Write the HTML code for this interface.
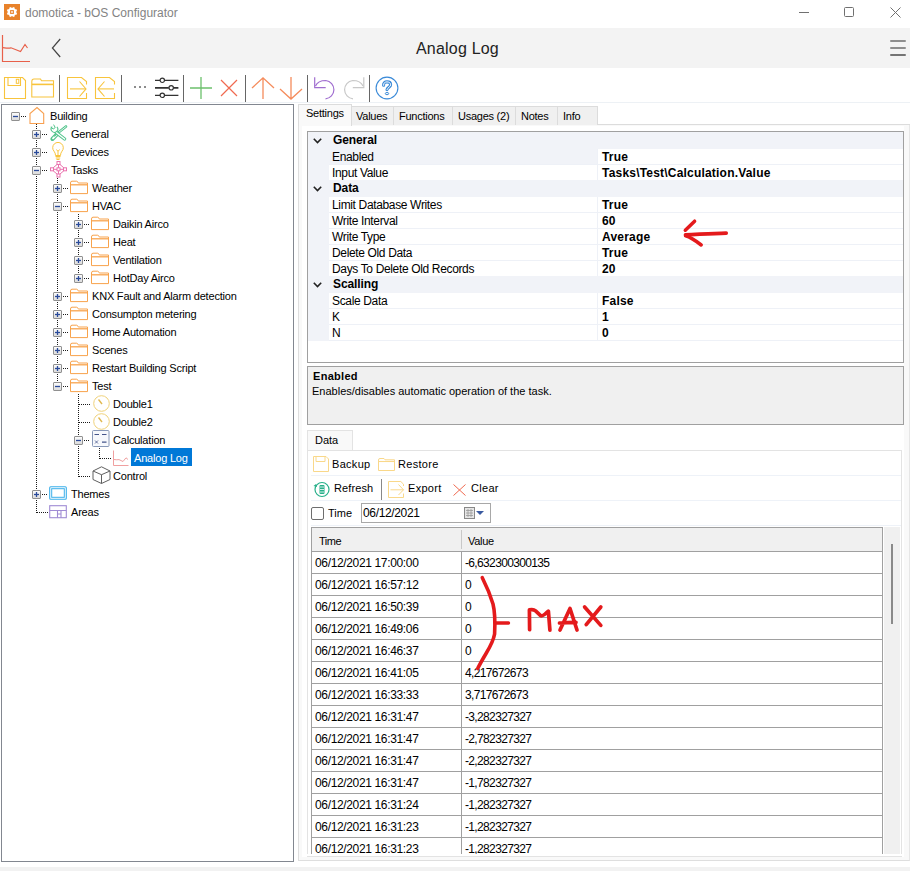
<!DOCTYPE html>
<html><head><meta charset="utf-8">
<style>
*{margin:0;padding:0;box-sizing:border-box}
html,body{width:910px;height:871px;overflow:hidden;background:#fff}
body{position:relative;font-family:"Liberation Sans",sans-serif;font-size:11px;color:#000}
.a{position:absolute}
.t{position:absolute;white-space:nowrap;line-height:12px;font-size:11px}
svg{position:absolute;overflow:visible}
</style></head><body>

<div class="a" style="left:4px;top:4px;width:16px;height:16px;background:#e8822a"></div>
<svg style="left:4px;top:4px" width="16" height="16" viewBox="0 0 16 16"><circle cx="8" cy="8" r="4.3" fill="#fff"/><rect x="7" y="2.9" width="2" height="2.5" fill="#fff" transform="rotate(22.5 8 8)"/><rect x="7" y="2.9" width="2" height="2.5" fill="#fff" transform="rotate(67.5 8 8)"/><rect x="7" y="2.9" width="2" height="2.5" fill="#fff" transform="rotate(112.5 8 8)"/><rect x="7" y="2.9" width="2" height="2.5" fill="#fff" transform="rotate(157.5 8 8)"/><rect x="7" y="2.9" width="2" height="2.5" fill="#fff" transform="rotate(202.5 8 8)"/><rect x="7" y="2.9" width="2" height="2.5" fill="#fff" transform="rotate(247.5 8 8)"/><rect x="7" y="2.9" width="2" height="2.5" fill="#fff" transform="rotate(292.5 8 8)"/><rect x="7" y="2.9" width="2" height="2.5" fill="#fff" transform="rotate(337.5 8 8)"/><rect x="6.1" y="6.1" width="3.8" height="3.8" fill="#e8822a"/><rect x="7.2" y="7.2" width="1.6" height="1.6" fill="#fff"/></svg>
<div class="t" style="left:25px;top:6px;font-size:12px;line-height:14px;color:#838383">domotica - bOS Configurator</div>
<div class="a" style="left:799px;top:12px;width:10px;height:1px;background:#707070"></div>
<div class="a" style="left:844px;top:7px;width:10px;height:10px;border:1px solid #707070;border-radius:1.5px"></div>
<svg style="left:890px;top:7px" width="11" height="11" viewBox="0 0 11 11"><path d="M0.5 0.5L10.5 10.5M10.5 0.5L0.5 10.5" stroke="#707070" stroke-width="1"/></svg>
<div class="a" style="left:0px;top:28px;width:910px;height:40px;background:#f3f3f3"></div>
<svg style="left:0px;top:28px" width="40" height="39" viewBox="0 0 40 39"><path d="M2.5 7v26.5H30" fill="none" stroke="#e8604a" stroke-width="1.2"/><path d="M3 19.6C6 20 8 20.6 11 19.8L20.5 23.5L25 16.5L27.5 20" fill="none" stroke="#e8604a" stroke-width="1.2"/></svg>
<svg style="left:50px;top:38px" width="14" height="20" viewBox="0 0 14 20"><path d="M10.2 1L2.4 10L10.2 19" fill="none" stroke="#444" stroke-width="1.2"/></svg>
<div class="t" style="left:416px;top:40px;font-size:16px;line-height:18px;color:#222;letter-spacing:0.2px">Analog Log</div>
<div class="a" style="left:890px;top:40px;width:16px;height:2px;background:#8e8e8e;border-radius:1px"></div>
<div class="a" style="left:890px;top:47px;width:16px;height:2px;background:#8e8e8e;border-radius:1px"></div>
<div class="a" style="left:890px;top:54px;width:16px;height:2px;background:#747474;border-radius:1px"></div>
<div class="a" style="left:0px;top:102px;width:910px;height:1px;background:#edf1f5"></div>
<svg style="left:4px;top:77px" width="22" height="22" viewBox="0 0 22 22"><path d="M0.5 0.5H18.5L21.5 3.5V21.5H0.5Z" fill="none" stroke="#f8c43c" stroke-width="1.1"/><path d="M4 0.5V8.5H16.5V0.5" fill="none" stroke="#f8c43c" stroke-width="1.1"/><rect x="12.3" y="2.3" width="2.5" height="4" fill="none" stroke="#f8c43c" stroke-width="1"/></svg>
<svg style="left:31px;top:78px" width="24" height="20" viewBox="0 0 24 20"><path d="M0.8 19V3.5Q0.8 1 3 1H9.5L10.5 2.8H22.5V19Z" fill="none" stroke="#f8c43c" stroke-width="1.1"/><path d="M0.8 6.4H22.5" stroke="#f8c43c" stroke-width="1.6"/></svg>
<div class="a" style="left:59px;top:75px;width:1px;height:27px;background:#666"></div>
<div class="a" style="left:121px;top:75px;width:1px;height:27px;background:#666"></div>
<div class="a" style="left:183px;top:75px;width:1px;height:27px;background:#666"></div>
<div class="a" style="left:245px;top:75px;width:1px;height:27px;background:#666"></div>
<div class="a" style="left:307px;top:75px;width:1px;height:27px;background:#666"></div>
<div class="a" style="left:369px;top:75px;width:1px;height:27px;background:#666"></div>
<svg style="left:67px;top:77px" width="21" height="23" viewBox="0 0 21 23"><path d="M19.5 7.5V4.5L14.5 0.5H0.5V21.5H19.5V16" fill="none" stroke="#f8c43c" stroke-width="1.1"/><path d="M3 11.9H19" stroke="#f8c43c" stroke-width="1.1"/><path d="M12.5 4.5L19 11.9L12.5 19.5" fill="none" stroke="#f8c43c" stroke-width="1.1"/></svg>
<svg style="left:95px;top:77px" width="21" height="23" viewBox="0 0 21 23"><path d="M19.5 7.5V4.5L14.5 0.5H0.5V21.5H19.5V16" fill="none" stroke="#f8c43c" stroke-width="1.1"/><path d="M3 11.9H19" stroke="#f8c43c" stroke-width="1.1"/><path d="M9.5 4.5L3 11.9L9.5 19.5" fill="none" stroke="#f8c43c" stroke-width="1.1"/></svg>
<div class="a" style="left:134px;top:86px;width:2px;height:2px;background:#666;border-radius:1px"></div>
<div class="a" style="left:139px;top:86px;width:2px;height:2px;background:#666;border-radius:1px"></div>
<div class="a" style="left:144px;top:86px;width:2px;height:2px;background:#666;border-radius:1px"></div>
<svg style="left:155px;top:76px" width="24" height="24" viewBox="0 0 24 24"><g stroke="#333" stroke-width="1.2" fill="none"><path d="M0 4.3H5M9.5 4.3H23.4"/><circle cx="7.3" cy="4.3" r="2.2"/><path d="M0 11.8H13.8M18.4 11.8H23.4" stroke-width="1.8"/><circle cx="16.2" cy="11.8" r="2.2"/><path d="M0 19.3H5M9.5 19.3H23.4"/><circle cx="7.3" cy="19.3" r="2.2"/></g></svg>
<svg style="left:190px;top:77px" width="22" height="22" viewBox="0 0 22 22"><path d="M11 0V22M0 11H22" stroke="#6cc06c" stroke-width="1.3"/></svg>
<svg style="left:221px;top:80px" width="16" height="16" viewBox="0 0 16 16"><path d="M0 0L16 16M16 0L0 16" stroke="#f06a50" stroke-width="1.2"/></svg>
<svg style="left:251px;top:77px" width="24" height="23" viewBox="0 0 24 23"><path d="M12 1V22M1 11L12 0.8L23 11" fill="none" stroke="#f58c5c" stroke-width="1.3"/></svg>
<svg style="left:279px;top:77px" width="24" height="23" viewBox="0 0 24 23"><path d="M12 0V21.5M1 12L12 22L23 12" fill="none" stroke="#f58c5c" stroke-width="1.3"/></svg>
<svg style="left:313px;top:76px" width="24" height="24" viewBox="0 0 24 24"><path d="M1.7 1.2V11.7H12.7" fill="none" stroke="#a06ed0" stroke-width="1.2"/><path d="M2.5 10C4.5 5.5 8 4.5 12.8 4.5A9.2 9.2 0 0 1 12.5 22.8" fill="none" stroke="#a06ed0" stroke-width="1.2"/></svg>
<svg style="left:342px;top:76px" width="24" height="24" viewBox="0 0 24 24"><path d="M21.8 1.2V11.7H10.8" fill="none" stroke="#c8c8c8" stroke-width="1.2"/><path d="M21 10C19 5.5 15.5 4.5 10.7 4.5A9.2 9.2 0 0 0 11 22.8" fill="none" stroke="#c8c8c8" stroke-width="1.2"/></svg>
<svg style="left:375px;top:76px" width="24" height="24" viewBox="0 0 24 24"><circle cx="12" cy="12" r="10.9" fill="none" stroke="#3a8ad8" stroke-width="1.1"/><path d="M8.6 9.3C8.4 6.8 10 5.9 12 5.9C14.3 5.9 15.6 7.1 15.6 8.8C15.6 11 12.7 11.3 12 13.6" fill="none" stroke="#3a8ad8" stroke-width="3.1" stroke-linecap="round"/><path d="M8.6 9.3C8.4 6.8 10 5.9 12 5.9C14.3 5.9 15.6 7.1 15.6 8.8C15.6 11 12.7 11.3 12 13.6" fill="none" stroke="#fff" stroke-width="1" stroke-linecap="round"/><ellipse cx="12" cy="17.6" rx="1.7" ry="1.1" fill="#fff" stroke="#3a8ad8" stroke-width="1"/></svg>
<div class="a" style="left:1px;top:104px;width:293px;height:758px;border:1px solid #828790;background:#fff"></div>
<div class="a" style="left:36px;top:124px;width:1px;height:389px;background:repeating-linear-gradient(to bottom,#1a1a1a 0 1px,transparent 1px 2px)"></div>
<div class="a" style="left:57px;top:178px;width:1px;height:209px;background:repeating-linear-gradient(to bottom,#1a1a1a 0 1px,transparent 1px 2px)"></div>
<div class="a" style="left:78px;top:214px;width:1px;height:65px;background:repeating-linear-gradient(to bottom,#1a1a1a 0 1px,transparent 1px 2px)"></div>
<div class="a" style="left:78px;top:394px;width:1px;height:83px;background:repeating-linear-gradient(to bottom,#1a1a1a 0 1px,transparent 1px 2px)"></div>
<div class="a" style="left:99px;top:448px;width:1px;height:11px;background:repeating-linear-gradient(to bottom,#1a1a1a 0 1px,transparent 1px 2px)"></div>
<div class="a" style="left:21px;top:116px;width:5px;height:1px;background:repeating-linear-gradient(to right,#1a1a1a 0 1px,transparent 1px 2px)"></div>
<div class="a" style="left:42px;top:134px;width:6px;height:1px;background:repeating-linear-gradient(to right,#1a1a1a 0 1px,transparent 1px 2px)"></div>
<div class="a" style="left:42px;top:152px;width:6px;height:1px;background:repeating-linear-gradient(to right,#1a1a1a 0 1px,transparent 1px 2px)"></div>
<div class="a" style="left:42px;top:170px;width:6px;height:1px;background:repeating-linear-gradient(to right,#1a1a1a 0 1px,transparent 1px 2px)"></div>
<div class="a" style="left:63px;top:188px;width:6px;height:1px;background:repeating-linear-gradient(to right,#1a1a1a 0 1px,transparent 1px 2px)"></div>
<div class="a" style="left:63px;top:206px;width:6px;height:1px;background:repeating-linear-gradient(to right,#1a1a1a 0 1px,transparent 1px 2px)"></div>
<div class="a" style="left:84px;top:224px;width:6px;height:1px;background:repeating-linear-gradient(to right,#1a1a1a 0 1px,transparent 1px 2px)"></div>
<div class="a" style="left:84px;top:242px;width:6px;height:1px;background:repeating-linear-gradient(to right,#1a1a1a 0 1px,transparent 1px 2px)"></div>
<div class="a" style="left:84px;top:260px;width:6px;height:1px;background:repeating-linear-gradient(to right,#1a1a1a 0 1px,transparent 1px 2px)"></div>
<div class="a" style="left:84px;top:278px;width:6px;height:1px;background:repeating-linear-gradient(to right,#1a1a1a 0 1px,transparent 1px 2px)"></div>
<div class="a" style="left:63px;top:296px;width:6px;height:1px;background:repeating-linear-gradient(to right,#1a1a1a 0 1px,transparent 1px 2px)"></div>
<div class="a" style="left:63px;top:314px;width:6px;height:1px;background:repeating-linear-gradient(to right,#1a1a1a 0 1px,transparent 1px 2px)"></div>
<div class="a" style="left:63px;top:332px;width:6px;height:1px;background:repeating-linear-gradient(to right,#1a1a1a 0 1px,transparent 1px 2px)"></div>
<div class="a" style="left:63px;top:350px;width:6px;height:1px;background:repeating-linear-gradient(to right,#1a1a1a 0 1px,transparent 1px 2px)"></div>
<div class="a" style="left:63px;top:368px;width:6px;height:1px;background:repeating-linear-gradient(to right,#1a1a1a 0 1px,transparent 1px 2px)"></div>
<div class="a" style="left:63px;top:386px;width:6px;height:1px;background:repeating-linear-gradient(to right,#1a1a1a 0 1px,transparent 1px 2px)"></div>
<div class="a" style="left:79px;top:404px;width:11px;height:1px;background:repeating-linear-gradient(to right,#1a1a1a 0 1px,transparent 1px 2px)"></div>
<div class="a" style="left:79px;top:422px;width:11px;height:1px;background:repeating-linear-gradient(to right,#1a1a1a 0 1px,transparent 1px 2px)"></div>
<div class="a" style="left:84px;top:440px;width:6px;height:1px;background:repeating-linear-gradient(to right,#1a1a1a 0 1px,transparent 1px 2px)"></div>
<div class="a" style="left:100px;top:458px;width:11px;height:1px;background:repeating-linear-gradient(to right,#1a1a1a 0 1px,transparent 1px 2px)"></div>
<div class="a" style="left:79px;top:476px;width:11px;height:1px;background:repeating-linear-gradient(to right,#1a1a1a 0 1px,transparent 1px 2px)"></div>
<div class="a" style="left:42px;top:494px;width:6px;height:1px;background:repeating-linear-gradient(to right,#1a1a1a 0 1px,transparent 1px 2px)"></div>
<div class="a" style="left:37px;top:512px;width:11px;height:1px;background:repeating-linear-gradient(to right,#1a1a1a 0 1px,transparent 1px 2px)"></div>
<div class="a" style="left:11px;top:112px;width:9px;height:9px;border:1px solid #909090;background:linear-gradient(#fbfbfb,#dcdcdc);border-radius:1px"></div>
<svg style="left:11px;top:112px" width="9" height="9" viewBox="0 0 9 9"><path d="M2 4.5H7" stroke="#2a4a9a" stroke-width="1.3"/></svg>
<svg style="left:29px;top:107px" width="16" height="18" viewBox="0 0 16 18"><path d="M1 16.5V6.5L8 0.5L14.7 6.5V16.5Z" fill="none" stroke="#f8a050" stroke-width="1.1"/></svg>
<div class="t" style="left:50px;top:110px;letter-spacing:-0.2px">Building</div>
<div class="a" style="left:32px;top:130px;width:9px;height:9px;border:1px solid #909090;background:linear-gradient(#fbfbfb,#dcdcdc);border-radius:1px"></div>
<svg style="left:32px;top:130px" width="9" height="9" viewBox="0 0 9 9"><path d="M2 4.5H7" stroke="#2a4a9a" stroke-width="1.3"/><path d="M4.5 2V7" stroke="#2a4a9a" stroke-width="1.3"/></svg>
<svg style="left:50px;top:124px" width="18" height="17" viewBox="0 0 18 17"><path d="M16 2.5L8.4 8.6" stroke="#52c48c" stroke-width="2.6" stroke-linecap="round"/><path d="M16 2.5L8.4 8.6" stroke="#fff" stroke-width="0.8" stroke-linecap="round"/><path d="M7.6 9.6L2.4 15" stroke="#52c48c" stroke-width="4" stroke-linecap="round"/><path d="M7 10.4L3 14.4" stroke="#fff" stroke-width="1.8" stroke-linecap="round"/><path d="M6.4 10.2L4.2 12.4" stroke="#52c48c" stroke-width="1.3"/><path d="M6 8.3L14.6 15" stroke="#52c48c" stroke-width="3.4" stroke-linecap="round"/><path d="M6 8.3L14.6 15" stroke="#fff" stroke-width="1.4" stroke-linecap="round"/><path d="M2.2 2.6A3.3 3.3 0 1 0 6.9 2.8" fill="#fff" stroke="#52c48c" stroke-width="1.1"/><path d="M3.6 0.6L5.2 3.6L3.2 5L0.8 3.2" fill="none" stroke="#52c48c" stroke-width="1"/></svg>
<div class="t" style="left:71px;top:128px;letter-spacing:-0.2px">General</div>
<div class="a" style="left:32px;top:148px;width:9px;height:9px;border:1px solid #909090;background:linear-gradient(#fbfbfb,#dcdcdc);border-radius:1px"></div>
<svg style="left:32px;top:148px" width="9" height="9" viewBox="0 0 9 9"><path d="M2 4.5H7" stroke="#2a4a9a" stroke-width="1.3"/><path d="M4.5 2V7" stroke="#2a4a9a" stroke-width="1.3"/></svg>
<svg style="left:52px;top:143px" width="13" height="18" viewBox="0 0 13 18"><g fill="none" stroke="#f8c43c" stroke-width="1"><path d="M3.5 12.5Q3.5 10 2 8.2A5.3 5.3 0 1 1 10 8.2Q8.5 10 8.5 12.5Z"/><path d="M4.5 6.5L6 8.5L7.5 6.5M6 8.5V12"/></g><path d="M3.5 13.5H8.5M3.8 15H8.2M4.5 16.5H7.5" stroke="#f8c43c" stroke-width="1.2"/></svg>
<div class="t" style="left:71px;top:146px;letter-spacing:-0.2px">Devices</div>
<div class="a" style="left:32px;top:166px;width:9px;height:9px;border:1px solid #909090;background:linear-gradient(#fbfbfb,#dcdcdc);border-radius:1px"></div>
<svg style="left:32px;top:166px" width="9" height="9" viewBox="0 0 9 9"><path d="M2 4.5H7" stroke="#2a4a9a" stroke-width="1.3"/></svg>
<svg style="left:50px;top:161px" width="18" height="17" viewBox="0 0 18 17"><g fill="none" stroke="#ea72ae" stroke-width="1"><rect x="7" y="0.5" width="3" height="3"/><rect x="7" y="13" width="3" height="3"/><rect x="0.5" y="6.8" width="3" height="3"/><rect x="13.5" y="6.8" width="3" height="3"/><rect x="7" y="6.8" width="3" height="3"/><path d="M3.5 8.3H7M10 8.3H13.5M8.5 3.5V6.8M8.5 9.8V13M3.2 6.8L7 3.5M10 3.5L13.8 6.8M3.2 9.8L7 13M10 13L13.8 9.8"/></g></svg>
<div class="t" style="left:71px;top:164px;letter-spacing:-0.2px">Tasks</div>
<div class="a" style="left:53px;top:184px;width:9px;height:9px;border:1px solid #909090;background:linear-gradient(#fbfbfb,#dcdcdc);border-radius:1px"></div>
<svg style="left:53px;top:184px" width="9" height="9" viewBox="0 0 9 9"><path d="M2 4.5H7" stroke="#2a4a9a" stroke-width="1.3"/><path d="M4.5 2V7" stroke="#2a4a9a" stroke-width="1.3"/></svg>
<svg style="left:69px;top:179.5px" width="19" height="15" viewBox="0 0 19 15"><path d="M1.5 13.6V3Q1.5 1.2 3 1.2H7.6Q8.6 1.2 9 2.5L9.3 3H18.5V13.6Z" fill="none" stroke="#f8a34c" stroke-width="1"/><path d="M1.5 4.8H18.5" stroke="#f8a34c" stroke-width="1.3"/></svg>
<div class="t" style="left:92px;top:182px;letter-spacing:-0.2px">Weather</div>
<div class="a" style="left:53px;top:202px;width:9px;height:9px;border:1px solid #909090;background:linear-gradient(#fbfbfb,#dcdcdc);border-radius:1px"></div>
<svg style="left:53px;top:202px" width="9" height="9" viewBox="0 0 9 9"><path d="M2 4.5H7" stroke="#2a4a9a" stroke-width="1.3"/></svg>
<svg style="left:69px;top:197.5px" width="19" height="15" viewBox="0 0 19 15"><path d="M1.5 13.6V3Q1.5 1.2 3 1.2H7.6Q8.6 1.2 9 2.5L9.3 3H18.5V13.6Z" fill="none" stroke="#f8a34c" stroke-width="1"/><path d="M1.5 4.8H18.5" stroke="#f8a34c" stroke-width="1.3"/></svg>
<div class="t" style="left:92px;top:200px;letter-spacing:-0.2px">HVAC</div>
<div class="a" style="left:74px;top:220px;width:9px;height:9px;border:1px solid #909090;background:linear-gradient(#fbfbfb,#dcdcdc);border-radius:1px"></div>
<svg style="left:74px;top:220px" width="9" height="9" viewBox="0 0 9 9"><path d="M2 4.5H7" stroke="#2a4a9a" stroke-width="1.3"/><path d="M4.5 2V7" stroke="#2a4a9a" stroke-width="1.3"/></svg>
<svg style="left:90px;top:215.5px" width="19" height="15" viewBox="0 0 19 15"><path d="M1.5 13.6V3Q1.5 1.2 3 1.2H7.6Q8.6 1.2 9 2.5L9.3 3H18.5V13.6Z" fill="none" stroke="#f8a34c" stroke-width="1"/><path d="M1.5 4.8H18.5" stroke="#f8a34c" stroke-width="1.3"/></svg>
<div class="t" style="left:113px;top:218px;letter-spacing:-0.2px">Daikin Airco</div>
<div class="a" style="left:74px;top:238px;width:9px;height:9px;border:1px solid #909090;background:linear-gradient(#fbfbfb,#dcdcdc);border-radius:1px"></div>
<svg style="left:74px;top:238px" width="9" height="9" viewBox="0 0 9 9"><path d="M2 4.5H7" stroke="#2a4a9a" stroke-width="1.3"/><path d="M4.5 2V7" stroke="#2a4a9a" stroke-width="1.3"/></svg>
<svg style="left:90px;top:233.5px" width="19" height="15" viewBox="0 0 19 15"><path d="M1.5 13.6V3Q1.5 1.2 3 1.2H7.6Q8.6 1.2 9 2.5L9.3 3H18.5V13.6Z" fill="none" stroke="#f8a34c" stroke-width="1"/><path d="M1.5 4.8H18.5" stroke="#f8a34c" stroke-width="1.3"/></svg>
<div class="t" style="left:113px;top:236px;letter-spacing:-0.2px">Heat</div>
<div class="a" style="left:74px;top:256px;width:9px;height:9px;border:1px solid #909090;background:linear-gradient(#fbfbfb,#dcdcdc);border-radius:1px"></div>
<svg style="left:74px;top:256px" width="9" height="9" viewBox="0 0 9 9"><path d="M2 4.5H7" stroke="#2a4a9a" stroke-width="1.3"/><path d="M4.5 2V7" stroke="#2a4a9a" stroke-width="1.3"/></svg>
<svg style="left:90px;top:251.5px" width="19" height="15" viewBox="0 0 19 15"><path d="M1.5 13.6V3Q1.5 1.2 3 1.2H7.6Q8.6 1.2 9 2.5L9.3 3H18.5V13.6Z" fill="none" stroke="#f8a34c" stroke-width="1"/><path d="M1.5 4.8H18.5" stroke="#f8a34c" stroke-width="1.3"/></svg>
<div class="t" style="left:113px;top:254px;letter-spacing:-0.2px">Ventilation</div>
<div class="a" style="left:74px;top:274px;width:9px;height:9px;border:1px solid #909090;background:linear-gradient(#fbfbfb,#dcdcdc);border-radius:1px"></div>
<svg style="left:74px;top:274px" width="9" height="9" viewBox="0 0 9 9"><path d="M2 4.5H7" stroke="#2a4a9a" stroke-width="1.3"/><path d="M4.5 2V7" stroke="#2a4a9a" stroke-width="1.3"/></svg>
<svg style="left:90px;top:269.5px" width="19" height="15" viewBox="0 0 19 15"><path d="M1.5 13.6V3Q1.5 1.2 3 1.2H7.6Q8.6 1.2 9 2.5L9.3 3H18.5V13.6Z" fill="none" stroke="#f8a34c" stroke-width="1"/><path d="M1.5 4.8H18.5" stroke="#f8a34c" stroke-width="1.3"/></svg>
<div class="t" style="left:113px;top:272px;letter-spacing:-0.2px">HotDay Airco</div>
<div class="a" style="left:53px;top:292px;width:9px;height:9px;border:1px solid #909090;background:linear-gradient(#fbfbfb,#dcdcdc);border-radius:1px"></div>
<svg style="left:53px;top:292px" width="9" height="9" viewBox="0 0 9 9"><path d="M2 4.5H7" stroke="#2a4a9a" stroke-width="1.3"/><path d="M4.5 2V7" stroke="#2a4a9a" stroke-width="1.3"/></svg>
<svg style="left:69px;top:287.5px" width="19" height="15" viewBox="0 0 19 15"><path d="M1.5 13.6V3Q1.5 1.2 3 1.2H7.6Q8.6 1.2 9 2.5L9.3 3H18.5V13.6Z" fill="none" stroke="#f8a34c" stroke-width="1"/><path d="M1.5 4.8H18.5" stroke="#f8a34c" stroke-width="1.3"/></svg>
<div class="t" style="left:92px;top:290px;letter-spacing:-0.2px">KNX Fault and Alarm detection</div>
<div class="a" style="left:53px;top:310px;width:9px;height:9px;border:1px solid #909090;background:linear-gradient(#fbfbfb,#dcdcdc);border-radius:1px"></div>
<svg style="left:53px;top:310px" width="9" height="9" viewBox="0 0 9 9"><path d="M2 4.5H7" stroke="#2a4a9a" stroke-width="1.3"/><path d="M4.5 2V7" stroke="#2a4a9a" stroke-width="1.3"/></svg>
<svg style="left:69px;top:305.5px" width="19" height="15" viewBox="0 0 19 15"><path d="M1.5 13.6V3Q1.5 1.2 3 1.2H7.6Q8.6 1.2 9 2.5L9.3 3H18.5V13.6Z" fill="none" stroke="#f8a34c" stroke-width="1"/><path d="M1.5 4.8H18.5" stroke="#f8a34c" stroke-width="1.3"/></svg>
<div class="t" style="left:92px;top:308px;letter-spacing:-0.2px">Consumpton metering</div>
<div class="a" style="left:53px;top:328px;width:9px;height:9px;border:1px solid #909090;background:linear-gradient(#fbfbfb,#dcdcdc);border-radius:1px"></div>
<svg style="left:53px;top:328px" width="9" height="9" viewBox="0 0 9 9"><path d="M2 4.5H7" stroke="#2a4a9a" stroke-width="1.3"/><path d="M4.5 2V7" stroke="#2a4a9a" stroke-width="1.3"/></svg>
<svg style="left:69px;top:323.5px" width="19" height="15" viewBox="0 0 19 15"><path d="M1.5 13.6V3Q1.5 1.2 3 1.2H7.6Q8.6 1.2 9 2.5L9.3 3H18.5V13.6Z" fill="none" stroke="#f8a34c" stroke-width="1"/><path d="M1.5 4.8H18.5" stroke="#f8a34c" stroke-width="1.3"/></svg>
<div class="t" style="left:92px;top:326px;letter-spacing:-0.2px">Home Automation</div>
<div class="a" style="left:53px;top:346px;width:9px;height:9px;border:1px solid #909090;background:linear-gradient(#fbfbfb,#dcdcdc);border-radius:1px"></div>
<svg style="left:53px;top:346px" width="9" height="9" viewBox="0 0 9 9"><path d="M2 4.5H7" stroke="#2a4a9a" stroke-width="1.3"/><path d="M4.5 2V7" stroke="#2a4a9a" stroke-width="1.3"/></svg>
<svg style="left:69px;top:341.5px" width="19" height="15" viewBox="0 0 19 15"><path d="M1.5 13.6V3Q1.5 1.2 3 1.2H7.6Q8.6 1.2 9 2.5L9.3 3H18.5V13.6Z" fill="none" stroke="#f8a34c" stroke-width="1"/><path d="M1.5 4.8H18.5" stroke="#f8a34c" stroke-width="1.3"/></svg>
<div class="t" style="left:92px;top:344px;letter-spacing:-0.2px">Scenes</div>
<div class="a" style="left:53px;top:364px;width:9px;height:9px;border:1px solid #909090;background:linear-gradient(#fbfbfb,#dcdcdc);border-radius:1px"></div>
<svg style="left:53px;top:364px" width="9" height="9" viewBox="0 0 9 9"><path d="M2 4.5H7" stroke="#2a4a9a" stroke-width="1.3"/><path d="M4.5 2V7" stroke="#2a4a9a" stroke-width="1.3"/></svg>
<svg style="left:69px;top:359.5px" width="19" height="15" viewBox="0 0 19 15"><path d="M1.5 13.6V3Q1.5 1.2 3 1.2H7.6Q8.6 1.2 9 2.5L9.3 3H18.5V13.6Z" fill="none" stroke="#f8a34c" stroke-width="1"/><path d="M1.5 4.8H18.5" stroke="#f8a34c" stroke-width="1.3"/></svg>
<div class="t" style="left:92px;top:362px;letter-spacing:-0.2px">Restart Building Script</div>
<div class="a" style="left:53px;top:382px;width:9px;height:9px;border:1px solid #909090;background:linear-gradient(#fbfbfb,#dcdcdc);border-radius:1px"></div>
<svg style="left:53px;top:382px" width="9" height="9" viewBox="0 0 9 9"><path d="M2 4.5H7" stroke="#2a4a9a" stroke-width="1.3"/></svg>
<svg style="left:69px;top:377.5px" width="19" height="15" viewBox="0 0 19 15"><path d="M1.5 13.6V3Q1.5 1.2 3 1.2H7.6Q8.6 1.2 9 2.5L9.3 3H18.5V13.6Z" fill="none" stroke="#f8a34c" stroke-width="1"/><path d="M1.5 4.8H18.5" stroke="#f8a34c" stroke-width="1.3"/></svg>
<div class="t" style="left:92px;top:380px;letter-spacing:-0.2px">Test</div>
<svg style="left:93px;top:395px" width="18" height="18" viewBox="0 0 18 18"><circle cx="8.5" cy="8.5" r="7.8" fill="none" stroke="#f0d27a" stroke-width="1"/><path d="M5.5 4.5L9 9" stroke="#e0b850" stroke-width="1.4"/></svg>
<div class="t" style="left:113px;top:398px;letter-spacing:-0.2px">Double1</div>
<svg style="left:93px;top:413px" width="18" height="18" viewBox="0 0 18 18"><circle cx="8.5" cy="8.5" r="7.8" fill="none" stroke="#f0d27a" stroke-width="1"/><path d="M5.5 4.5L9 9" stroke="#e0b850" stroke-width="1.4"/></svg>
<div class="t" style="left:113px;top:416px;letter-spacing:-0.2px">Double2</div>
<div class="a" style="left:74px;top:436px;width:9px;height:9px;border:1px solid #909090;background:linear-gradient(#fbfbfb,#dcdcdc);border-radius:1px"></div>
<svg style="left:74px;top:436px" width="9" height="9" viewBox="0 0 9 9"><path d="M2 4.5H7" stroke="#2a4a9a" stroke-width="1.3"/></svg>
<svg style="left:92px;top:430px" width="18" height="18" viewBox="0 0 18 18"><rect x="0.5" y="0.5" width="16.5" height="16" rx="1" fill="#f6f8fc" stroke="#8898b8" stroke-width="1"/><path d="M2.5 4.5H7M10 4.5H14.5M10 12.2H14.5" stroke="#44548a" stroke-width="1.2"/><path d="M3 10.5L6 13.5M6 10.5L3 13.5" stroke="#44548a" stroke-width="0.8"/></svg>
<div class="t" style="left:113px;top:434px;letter-spacing:-0.2px">Calculation</div>
<svg style="left:112px;top:450px" width="18" height="17" viewBox="0 0 18 17"><path d="M1.5 0.5V15.5H16.5" fill="none" stroke="#f0a0a0" stroke-width="1"/><path d="M2 9.5Q5 10 7 9.6L11 11.5L14 7.8L16 9.5" fill="none" stroke="#f0a0a0" stroke-width="1"/></svg>
<div class="a" style="left:131px;top:448px;width:61px;height:18px;background:#0078d7"></div>
<div class="t" style="left:134px;top:452px;color:#fff;letter-spacing:-0.2px">Analog Log</div>
<svg style="left:92px;top:466px" width="19" height="18" viewBox="0 0 19 18"><g fill="none" stroke="#606060" stroke-width="1"><path d="M9.5 0.8L18 5V13.5L9.5 17.5L1 13.5V5Z"/><path d="M9.5 8.7V17.5M1 5L9.5 8.7L18 5" /></g></svg>
<div class="t" style="left:113px;top:470px;letter-spacing:-0.2px">Control</div>
<div class="a" style="left:32px;top:490px;width:9px;height:9px;border:1px solid #909090;background:linear-gradient(#fbfbfb,#dcdcdc);border-radius:1px"></div>
<svg style="left:32px;top:490px" width="9" height="9" viewBox="0 0 9 9"><path d="M2 4.5H7" stroke="#2a4a9a" stroke-width="1.3"/><path d="M4.5 2V7" stroke="#2a4a9a" stroke-width="1.3"/></svg>
<svg style="left:49px;top:486px" width="18" height="14" viewBox="0 0 18 14"><rect x="0.7" y="0.7" width="16.6" height="12.6" rx="1" fill="none" stroke="#3cb0ea" stroke-width="1.1"/><rect x="2.7" y="2.7" width="12.6" height="8.6" fill="none" stroke="#3cb0ea" stroke-width="1"/></svg>
<div class="t" style="left:71px;top:488px;letter-spacing:-0.2px">Themes</div>
<svg style="left:49px;top:505px" width="18" height="14" viewBox="0 0 18 14"><g fill="none" stroke="#a08cd4" stroke-width="1.1"><rect x="0.7" y="0.7" width="16.6" height="12"/><path d="M0.7 5.5H17.3M8.5 5.5V12.7M12 6V12.7M8.5 9H12"/></g></svg>
<div class="t" style="left:71px;top:506px;letter-spacing:-0.2px">Areas</div>
<div class="a" style="left:298px;top:124px;width:612px;height:737px;border:1px solid #dedede;border-right:1px solid #e6e6e6;background:#f9f9f9"></div>
<div class="a" style="left:302px;top:126px;width:602px;height:731px;background:#fff"></div>
<div class="a" style="left:298px;top:124px;width:612px;height:1px;background:#dcdcdc"></div>
<div class="a" style="left:351px;top:106px;width:43px;height:19px;background:#f0f0f0;border:1px solid #dcdcdc;border-bottom:none"></div>
<div class="a" style="left:393px;top:106px;width:60px;height:19px;background:#f0f0f0;border:1px solid #dcdcdc;border-bottom:none"></div>
<div class="a" style="left:452px;top:106px;width:64px;height:19px;background:#f0f0f0;border:1px solid #dcdcdc;border-bottom:none"></div>
<div class="a" style="left:515px;top:106px;width:43px;height:19px;background:#f0f0f0;border:1px solid #dcdcdc;border-bottom:none"></div>
<div class="a" style="left:557px;top:106px;width:41px;height:19px;background:#f0f0f0;border:1px solid #dcdcdc;border-bottom:none"></div>
<div class="a" style="left:298px;top:104px;width:54px;height:22px;background:#f9f9f9;border:1px solid #dcdcdc;border-bottom:none"></div>
<div class="t" style="left:306px;top:107px;letter-spacing:-0.25px">Settings</div>
<div class="t" style="left:356px;top:110px;letter-spacing:-0.25px">Values</div>
<div class="t" style="left:399px;top:110px;letter-spacing:-0.25px">Functions</div>
<div class="t" style="left:458px;top:110px;letter-spacing:-0.25px">Usages (2)</div>
<div class="t" style="left:521px;top:110px;letter-spacing:-0.25px">Notes</div>
<div class="t" style="left:563px;top:110px;letter-spacing:-0.25px">Info</div>
<div class="a" style="left:307px;top:131px;width:597px;height:232px;border:1px solid #a0a0a0;background:#fff"></div>
<div class="a" style="left:308px;top:132px;width:21px;height:209px;background:#f1f3f8"></div>
<div class="a" style="left:308px;top:132px;width:595px;height:17px;background:#f1f3f8"></div>
<svg style="left:313px;top:138px" width="9" height="6" viewBox="0 0 9 6"><path d="M0.8 0.8L4.5 4.5L8.2 0.8" fill="none" stroke="#222" stroke-width="1.6"/></svg>
<div class="t" style="left:333px;top:134px;font-weight:bold;font-size:12px;letter-spacing:-0.1px">General</div>
<div class="a" style="left:329px;top:149px;width:268px;height:15px;background:#f1f3f8"></div>
<div class="a" style="left:329px;top:164px;width:574px;height:1px;background:#eef1f7"></div>
<div class="a" style="left:597px;top:149px;width:1px;height:15px;background:#eef1f7"></div>
<div class="t" style="left:332px;top:151px;font-size:12px;letter-spacing:-0.35px">Enabled</div>
<div class="t" style="left:602px;top:151px;font-weight:bold;font-size:12px;letter-spacing:0.2px">True</div>
<div class="a" style="left:329px;top:180px;width:574px;height:1px;background:#eef1f7"></div>
<div class="a" style="left:597px;top:165px;width:1px;height:15px;background:#eef1f7"></div>
<div class="t" style="left:332px;top:167px;font-size:12px;letter-spacing:-0.35px">Input Value</div>
<div class="t" style="left:602px;top:167px;font-weight:bold;font-size:12px;letter-spacing:0.2px">Tasks\Test\Calculation.Value</div>
<div class="a" style="left:308px;top:180px;width:595px;height:17px;background:#f1f3f8"></div>
<svg style="left:313px;top:186px" width="9" height="6" viewBox="0 0 9 6"><path d="M0.8 0.8L4.5 4.5L8.2 0.8" fill="none" stroke="#222" stroke-width="1.6"/></svg>
<div class="t" style="left:333px;top:182px;font-weight:bold;font-size:12px;letter-spacing:-0.1px">Data</div>
<div class="a" style="left:329px;top:212px;width:574px;height:1px;background:#eef1f7"></div>
<div class="a" style="left:597px;top:197px;width:1px;height:15px;background:#eef1f7"></div>
<div class="t" style="left:332px;top:199px;font-size:12px;letter-spacing:-0.35px">Limit Database Writes</div>
<div class="t" style="left:602px;top:199px;font-weight:bold;font-size:12px;letter-spacing:0.2px">True</div>
<div class="a" style="left:329px;top:228px;width:574px;height:1px;background:#eef1f7"></div>
<div class="a" style="left:597px;top:213px;width:1px;height:15px;background:#eef1f7"></div>
<div class="t" style="left:332px;top:215px;font-size:12px;letter-spacing:-0.35px">Write Interval</div>
<div class="t" style="left:602px;top:215px;font-weight:bold;font-size:12px;letter-spacing:0.2px">60</div>
<div class="a" style="left:329px;top:244px;width:574px;height:1px;background:#eef1f7"></div>
<div class="a" style="left:597px;top:229px;width:1px;height:15px;background:#eef1f7"></div>
<div class="t" style="left:332px;top:231px;font-size:12px;letter-spacing:-0.35px">Write Type</div>
<div class="t" style="left:602px;top:231px;font-weight:bold;font-size:12px;letter-spacing:0.2px">Average</div>
<div class="a" style="left:329px;top:260px;width:574px;height:1px;background:#eef1f7"></div>
<div class="a" style="left:597px;top:245px;width:1px;height:15px;background:#eef1f7"></div>
<div class="t" style="left:332px;top:247px;font-size:12px;letter-spacing:-0.35px">Delete Old Data</div>
<div class="t" style="left:602px;top:247px;font-weight:bold;font-size:12px;letter-spacing:0.2px">True</div>
<div class="a" style="left:329px;top:276px;width:574px;height:1px;background:#eef1f7"></div>
<div class="a" style="left:597px;top:261px;width:1px;height:15px;background:#eef1f7"></div>
<div class="t" style="left:332px;top:263px;font-size:12px;letter-spacing:-0.35px">Days To Delete Old Records</div>
<div class="t" style="left:602px;top:263px;font-weight:bold;font-size:12px;letter-spacing:0.2px">20</div>
<div class="a" style="left:308px;top:276px;width:595px;height:17px;background:#f1f3f8"></div>
<svg style="left:313px;top:282px" width="9" height="6" viewBox="0 0 9 6"><path d="M0.8 0.8L4.5 4.5L8.2 0.8" fill="none" stroke="#222" stroke-width="1.6"/></svg>
<div class="t" style="left:333px;top:278px;font-weight:bold;font-size:12px;letter-spacing:-0.1px">Scalling</div>
<div class="a" style="left:329px;top:308px;width:574px;height:1px;background:#eef1f7"></div>
<div class="a" style="left:597px;top:293px;width:1px;height:15px;background:#eef1f7"></div>
<div class="t" style="left:332px;top:295px;font-size:12px;letter-spacing:-0.35px">Scale Data</div>
<div class="t" style="left:602px;top:295px;font-weight:bold;font-size:12px;letter-spacing:0.2px">False</div>
<div class="a" style="left:329px;top:324px;width:574px;height:1px;background:#eef1f7"></div>
<div class="a" style="left:597px;top:309px;width:1px;height:15px;background:#eef1f7"></div>
<div class="t" style="left:332px;top:311px;font-size:12px;letter-spacing:-0.35px">K</div>
<div class="t" style="left:602px;top:311px;font-weight:bold;font-size:12px;letter-spacing:0.2px">1</div>
<div class="a" style="left:329px;top:340px;width:574px;height:1px;background:#eef1f7"></div>
<div class="a" style="left:597px;top:325px;width:1px;height:15px;background:#eef1f7"></div>
<div class="t" style="left:332px;top:327px;font-size:12px;letter-spacing:-0.35px">N</div>
<div class="t" style="left:602px;top:327px;font-weight:bold;font-size:12px;letter-spacing:0.2px">0</div>
<div class="a" style="left:307px;top:366px;width:597px;height:59px;border:1px solid #a0a0a0;background:#f0f0f0"></div>
<div class="t" style="left:313px;top:370px;font-weight:bold;letter-spacing:0.3px">Enabled</div>
<div class="t" style="left:312px;top:385px;">Enables/disables automatic operation of the task.</div>
<div class="a" style="left:307px;top:430px;width:46px;height:21px;background:#f9f9f9;border:1px solid #e3e3e3;border-bottom:none"></div>
<div class="t" style="left:315px;top:434px;">Data</div>
<div class="a" style="left:307px;top:450px;width:595px;height:407px;border:1px solid #e3e3e3;background:#fff"></div>
<div class="a" style="left:311px;top:475px;width:590px;height:1px;background:#eef2f8"></div>
<div class="a" style="left:311px;top:500px;width:590px;height:1px;background:#eef2f8"></div>
<div class="a" style="left:311px;top:525px;width:590px;height:1px;background:#eef2f8"></div>
<svg style="left:313px;top:456px" width="16" height="16" viewBox="0 0 16 16"><path d="M0.5 0.5H13L15.5 3V15.5H0.5Z" fill="none" stroke="#f9d88a" stroke-width="1"/><path d="M3 0.5V5.5H12V0.5" fill="none" stroke="#f9d88a" stroke-width="1"/></svg>
<div class="t" style="left:332px;top:458px;letter-spacing:0.3px">Backup</div>
<svg style="left:378px;top:458px" width="17" height="13" viewBox="0 0 17 13"><path d="M0.5 12.5V2Q0.5 0.5 2 0.5H6L7 1.8H16.5V12.5Z" fill="none" stroke="#f9d88a" stroke-width="1"/><path d="M0.5 3.5H16.5" stroke="#f9d88a" stroke-width="1.1"/></svg>
<div class="t" style="left:398px;top:458px;letter-spacing:0.3px">Restore</div>
<svg style="left:313px;top:481px" width="17" height="17" viewBox="0 0 17 17"><circle cx="9" cy="8.5" r="7" fill="none" stroke="#28b08a" stroke-width="1.2"/><rect x="6.5" y="4" width="5" height="9" rx="1" fill="#28b08a"/><path d="M7 6H11M7 8.5H11M7 11H11" stroke="#fff" stroke-width="0.8"/><path d="M0.5 5L3 3L4 6" fill="#28b08a"/></svg>
<div class="t" style="left:334px;top:482px;letter-spacing:0.1px">Refresh</div>
<div class="a" style="left:381px;top:479px;width:1px;height:21px;background:#888"></div>
<svg style="left:388px;top:481px" width="17" height="17" viewBox="0 0 17 17"><path d="M15.5 5V3.2L12.8 0.5H0.5V16.5H15.5V12.5" fill="none" stroke="#f9d88a" stroke-width="1"/><path d="M2.5 8.8H15.5M10.5 3.5L15.5 8.8L10.5 14" fill="none" stroke="#f9d88a" stroke-width="1"/></svg>
<div class="t" style="left:408px;top:482px;letter-spacing:0.3px">Export</div>
<svg style="left:453px;top:484px" width="13" height="12" viewBox="0 0 13 12"><path d="M0.5 0.5L12.5 11.5M12.5 0.5L0.5 11.5" stroke="#f06a50" stroke-width="1"/></svg>
<div class="t" style="left:471px;top:482px;letter-spacing:0.3px">Clear</div>
<div class="a" style="left:311px;top:507px;width:13px;height:13px;border:1px solid #6e6e6e;border-radius:2px;background:#fff"></div>
<div class="t" style="left:328px;top:507px;">Time</div>
<div class="a" style="left:361px;top:503px;width:130px;height:20px;border:1px solid #a8a8a8;background:#fff"></div>
<div class="t" style="left:363px;top:507px;font-size:12px;letter-spacing:-0.35px">06/12/2021</div>
<svg style="left:464px;top:507px" width="11" height="12" viewBox="0 0 11 12"><rect x="0.5" y="0.5" width="10" height="11" fill="#e6e6e6" stroke="#888" stroke-width="1"/><path d="M2 3.5H9M2 6H9M2 8.5H9M4 2V10M7 2V10" stroke="#999" stroke-width="0.8"/></svg>
<svg style="left:476px;top:511px" width="8" height="4" viewBox="0 0 8 4"><path d="M0 0H8L4 4Z" fill="#3a5aa0"/></svg>
<div class="a" style="left:311px;top:527px;width:572px;height:327px;border:1px solid #a0a0a0;border-bottom:none;background:#fff"></div>
<div class="a" style="left:312px;top:528px;width:570px;height:23px;background:#f0f0f0"></div>
<div class="a" style="left:461px;top:530px;width:1px;height:19px;background:#c8c8c8"></div>
<div class="a" style="left:312px;top:551px;width:570px;height:1px;background:#a0a0a0"></div>
<div class="t" style="left:319px;top:535px;letter-spacing:-0.5px">Time</div>
<div class="t" style="left:468px;top:535px;letter-spacing:-0.3px">Value</div>
<div class="t" style="left:315px;top:557px;font-size:12px;letter-spacing:-0.35px">06/12/2021 17:00:00</div>
<div class="t" style="left:465px;top:557px;font-size:12px;letter-spacing:-0.65px">-6,632300300135</div>
<div class="a" style="left:312px;top:573px;width:570px;height:1px;background:#a0a0a0"></div>
<div class="t" style="left:315px;top:579px;font-size:12px;letter-spacing:-0.35px">06/12/2021 16:57:12</div>
<div class="t" style="left:465px;top:579px;font-size:12px;letter-spacing:-0.65px">0</div>
<div class="a" style="left:312px;top:595px;width:570px;height:1px;background:#a0a0a0"></div>
<div class="t" style="left:315px;top:601px;font-size:12px;letter-spacing:-0.35px">06/12/2021 16:50:39</div>
<div class="t" style="left:465px;top:601px;font-size:12px;letter-spacing:-0.65px">0</div>
<div class="a" style="left:312px;top:617px;width:570px;height:1px;background:#a0a0a0"></div>
<div class="t" style="left:315px;top:623px;font-size:12px;letter-spacing:-0.35px">06/12/2021 16:49:06</div>
<div class="t" style="left:465px;top:623px;font-size:12px;letter-spacing:-0.65px">0</div>
<div class="a" style="left:312px;top:639px;width:570px;height:1px;background:#a0a0a0"></div>
<div class="t" style="left:315px;top:645px;font-size:12px;letter-spacing:-0.35px">06/12/2021 16:46:37</div>
<div class="t" style="left:465px;top:645px;font-size:12px;letter-spacing:-0.65px">0</div>
<div class="a" style="left:312px;top:661px;width:570px;height:1px;background:#a0a0a0"></div>
<div class="t" style="left:315px;top:667px;font-size:12px;letter-spacing:-0.35px">06/12/2021 16:41:05</div>
<div class="t" style="left:465px;top:667px;font-size:12px;letter-spacing:-0.65px">4,217672673</div>
<div class="a" style="left:312px;top:683px;width:570px;height:1px;background:#a0a0a0"></div>
<div class="t" style="left:315px;top:689px;font-size:12px;letter-spacing:-0.35px">06/12/2021 16:33:33</div>
<div class="t" style="left:465px;top:689px;font-size:12px;letter-spacing:-0.65px">3,717672673</div>
<div class="a" style="left:312px;top:705px;width:570px;height:1px;background:#a0a0a0"></div>
<div class="t" style="left:315px;top:711px;font-size:12px;letter-spacing:-0.35px">06/12/2021 16:31:47</div>
<div class="t" style="left:465px;top:711px;font-size:12px;letter-spacing:-0.65px">-3,282327327</div>
<div class="a" style="left:312px;top:727px;width:570px;height:1px;background:#a0a0a0"></div>
<div class="t" style="left:315px;top:733px;font-size:12px;letter-spacing:-0.35px">06/12/2021 16:31:47</div>
<div class="t" style="left:465px;top:733px;font-size:12px;letter-spacing:-0.65px">-2,782327327</div>
<div class="a" style="left:312px;top:749px;width:570px;height:1px;background:#a0a0a0"></div>
<div class="t" style="left:315px;top:755px;font-size:12px;letter-spacing:-0.35px">06/12/2021 16:31:47</div>
<div class="t" style="left:465px;top:755px;font-size:12px;letter-spacing:-0.65px">-2,282327327</div>
<div class="a" style="left:312px;top:771px;width:570px;height:1px;background:#a0a0a0"></div>
<div class="t" style="left:315px;top:777px;font-size:12px;letter-spacing:-0.35px">06/12/2021 16:31:47</div>
<div class="t" style="left:465px;top:777px;font-size:12px;letter-spacing:-0.65px">-1,782327327</div>
<div class="a" style="left:312px;top:793px;width:570px;height:1px;background:#a0a0a0"></div>
<div class="t" style="left:315px;top:799px;font-size:12px;letter-spacing:-0.35px">06/12/2021 16:31:24</div>
<div class="t" style="left:465px;top:799px;font-size:12px;letter-spacing:-0.65px">-1,282327327</div>
<div class="a" style="left:312px;top:815px;width:570px;height:1px;background:#a0a0a0"></div>
<div class="t" style="left:315px;top:821px;font-size:12px;letter-spacing:-0.35px">06/12/2021 16:31:23</div>
<div class="t" style="left:465px;top:821px;font-size:12px;letter-spacing:-0.65px">-1,282327327</div>
<div class="a" style="left:312px;top:837px;width:570px;height:1px;background:#a0a0a0"></div>
<div class="t" style="left:315px;top:843px;font-size:12px;letter-spacing:-0.35px">06/12/2021 16:31:23</div>
<div class="t" style="left:465px;top:843px;font-size:12px;letter-spacing:-0.65px">-1,282327327</div>
<div class="a" style="left:461px;top:552px;width:1px;height:302px;background:#a0a0a0"></div>
<div class="a" style="left:307px;top:854px;width:596px;height:2px;background:#fff"></div>
<div class="a" style="left:884px;top:527px;width:16px;height:327px;background:#f0f0f0"></div>
<div class="a" style="left:891px;top:544px;width:2px;height:80px;background:#8a8a8a"></div>
<svg style="left:0;top:0" width="910" height="871" viewBox="0 0 910 871"><g fill="none" stroke="#e41a1c" stroke-linecap="round" stroke-linejoin="round"><path stroke-width="3.7" d="M726.2 233.1C712 233.4 700 234.2 685.5 234.8"/><path stroke-width="3.5" d="M694.6 221.2L685.3 230.2"/><path stroke-width="3.5" d="M685.6 235.8C690 237 696 241 701.2 245"/><path stroke-width="3.6" d="M482.3 577.7C486 585 490 594 493 604C495 612 495 626 494.6 634C493 643 488 650 484 657C481 662 479 666 477.7 668.5"/><path stroke-width="3.4" d="M495.4 623H508.5"/><path stroke-width="3.7" d="M529.6 629.7L529.4 609.9C532 609.2 534 609.5 535.6 610.9L540.6 615.6C542 616.6 544 615.4 548.4 611.2L549.9 630.1"/><path stroke-width="3.7" d="M560 630L570 608.5L577 630M559.5 623C565 622.6 570 622.4 576 622.3"/><path stroke-width="3.7" d="M584.6 607L600.8 625.4M600.8 607L586.2 624.6"/></g></svg>
<div class="a" style="left:0px;top:867px;width:910px;height:4px;background:#f2f2f2"></div>
</body></html>
